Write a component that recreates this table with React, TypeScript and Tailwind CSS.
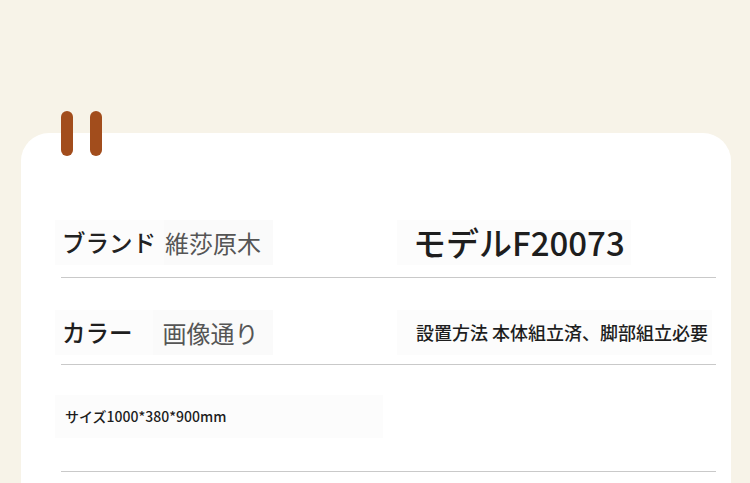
const jp = { fontFamily: '"Noto Sans CJK JP", "Noto Sans", sans-serif' };

export default function App() {
  return (
    <div className="w-[750px] h-[483px] overflow-hidden bg-[#f7f3e8] pt-[133px] pl-[21px]" style={jp}>
      <div className="relative w-[710px] h-[400px] bg-white rounded-t-[28px] pl-[40px] pr-[15px] pt-[87px] font-medium whitespace-nowrap">
        {/* binder tabs */}
        <div className="absolute -top-[22px] left-[40px] w-[12px] h-[45px] rounded-full bg-[#a24d1c]" />
        <div className="absolute -top-[22px] left-[69px] w-[12px] h-[45px] rounded-full bg-[#a24d1c]" />

        {/* row 1 */}
        <div className="flex border-b border-[#c9c9c9] pb-[12px]">
          <div className="w-[342px] flex items-center h-[45px] -ml-[6px]">
            <div className="h-full flex items-center bg-[#fcfcfc] pl-[7px] pr-[8px] text-[23.5px] text-[#222]">ブランド</div>
            <div className="h-full flex items-center bg-[#fafafa] pl-[1px] pr-[12px] text-[24px] font-normal text-[#555]">維莎原木</div>
          </div>
          <div className="flex items-center h-[45px] bg-[#fcfcfc] pl-[16px] pr-[6px] text-[33px] text-[#1e1e1e]">モデルF20073</div>
        </div>

        {/* row 2 */}
        <div className="flex border-b border-[#c9c9c9] pt-[32px] pb-[9px]">
          <div className="w-[342px] flex items-center h-[45px] -ml-[6px]">
            <div className="h-full flex items-center bg-[#fcfcfc] pl-[7px] pr-[20px] text-[23.5px] text-[#1e1e1e]">カラー</div>
            <div className="h-full flex items-center bg-[#fafafa] pl-[10px] pr-[14px] text-[24px] font-normal text-[#555]">画像通り</div>
          </div>
          <div className="flex items-center h-[45px] bg-[#fcfcfc] pl-[19px] pr-[4px] text-[18px] text-[#1e1e1e]">設置方法 本体組立済、脚部組立必要</div>
        </div>

        {/* row 3 */}
        <div className="flex border-b border-[#c9c9c9] pt-[30px] pb-[33px]">
          <div className="-ml-[6px] w-[328px] h-[43px] flex items-center bg-[#fcfcfc] pl-[10px] text-[14px] text-[#1e1e1e]">サイズ1000*380*900mm</div>
        </div>
      </div>
    </div>
  );
}
